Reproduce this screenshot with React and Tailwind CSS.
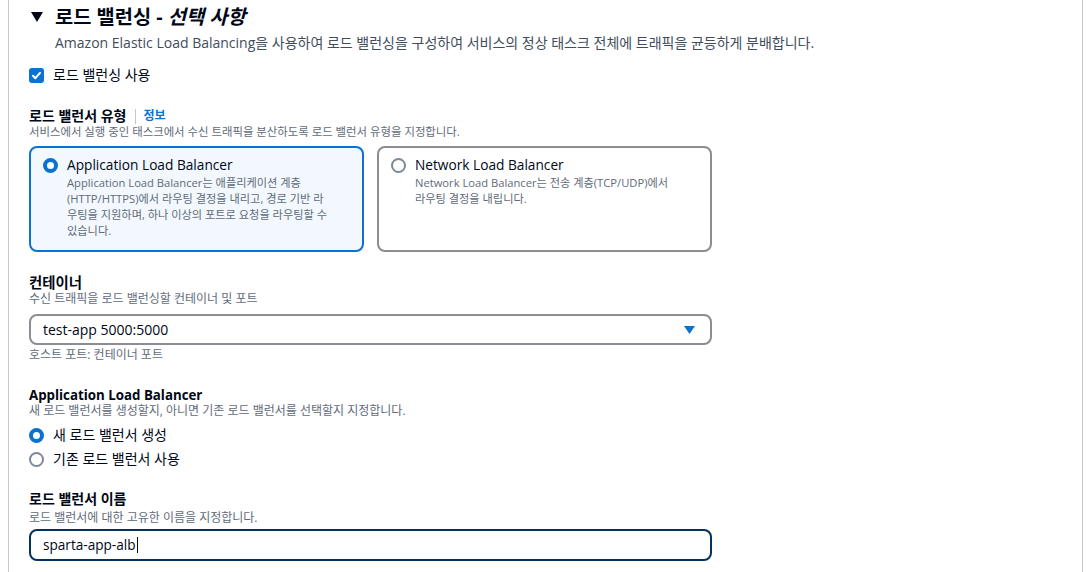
import React from "react";

const font = { fontFamily: '"Open Sans", "Noto Sans CJK KR", sans-serif' };

function Radio({ checked }) {
  return checked ? (
    <span className="inline-block w-[15px] h-[15px] rounded-full border-[4px] border-[#0972d3] bg-white shrink-0" />
  ) : (
    <span className="inline-block w-[15px] h-[15px] rounded-full border-2 border-[#7d8998] bg-white shrink-0" />
  );
}

function LbCard({ checked, title, lines }) {
  return (
    <div
      className={`h-[106px] rounded-lg border-2 px-3 pt-[10px] ${
        checked ? "border-[#0972d3] bg-[#f2f8fd]" : "border-[#8c8c94] bg-white"
      }`}
    >
      <div className="flex gap-[9px]">
        <div className="h-[15px] flex items-center">
          <Radio checked={checked} />
        </div>
        <div className="-mt-[1px]">
          <div className="text-[13.7px] leading-[16px] text-[#000716]">{title}</div>
          <div className="mt-[2px] text-[11.2px] leading-[16px] text-[#5f6b7a]">
            {lines.map((l, i) => (
              <div key={i} className="whitespace-nowrap">{l}</div>
            ))}
          </div>
        </div>
      </div>
    </div>
  );
}

function Heading({ children, className = "text-[14px]" }) {
  return <div className={`leading-[16px] font-bold text-[#000716] ${className}`}>{children}</div>;
}

function Desc({ children, className = "" }) {
  return <div className={`leading-[16px] text-[#5f6b7a] ${className}`}>{children}</div>;
}

export default function App() {
  return (
    <div style={font} className="min-h-screen bg-white">
      <div className="ml-2 mr-[4px] h-[572px] border-x border-[#c6c6cd] bg-white">
        {/* section header */}
        <div className="flex items-center pt-[7px] h-[27px] pl-[22px]">
          <svg width="12" height="10" viewBox="0 0 12 10" className="shrink-0">
            <path d="M0 0 L12 0 L6 10 Z" fill="#000716" />
          </svg>
          <h2 className="ml-3 text-[19.8px] leading-[20px] font-bold text-[#000716]">
            로드 밸런싱 - <i>선택 사항</i>
          </h2>
        </div>
        <div className="pl-[46px] mt-[7px] text-[14px] leading-[18px] text-[#414d5c]">
          Amazon Elastic Load Balancing을 사용하여 로드 밸런싱을 구성하여 서비스의 정상 태스크 전체에 트래픽을 균등하게 분배합니다.
        </div>

        <div className="pl-5 w-[703px]">
          {/* checkbox */}
          <div className="mt-[15px] flex items-center h-[16px]">
            <span className="w-[15px] h-[15px] rounded-[3px] bg-[#0972d3] flex items-center justify-center">
              <svg width="11" height="11" viewBox="0 0 11 11">
                <path d="M2 5.8 L4.4 8.2 L9 2.8" fill="none" stroke="white" strokeWidth="2" strokeLinecap="round" strokeLinejoin="round" />
              </svg>
            </span>
            <span className="ml-[9px] text-[14px] leading-[16px] text-[#000716]">로드 밸런싱 사용</span>
          </div>

          {/* lb type */}
          <div className="mt-[25px] flex items-center">
            <Heading>로드 밸런서 유형</Heading>
            <span className="ml-[9px] h-[15px] border-l border-[#c6c6cd]" />
            <span className="ml-[7px] text-[12px] leading-[16px] font-bold text-[#0972d3]">정보</span>
          </div>
          <Desc className="text-[11.4px]">서비스에서 실행 중인 태스크에서 수신 트래픽을 분산하도록 로드 밸런서 유형을 지정합니다.</Desc>
          <div className="mt-[6px] grid grid-cols-2 gap-[13px]">
            <LbCard
              checked
              title="Application Load Balancer"
              lines={[
                "Application Load Balancer는 애플리케이션 계층",
                "(HTTP/HTTPS)에서 라우팅 결정을 내리고, 경로 기반 라",
                "우팅을 지원하며, 하나 이상의 포트로 요청을 라우팅할 수",
                "있습니다.",
              ]}
            />
            <LbCard
              title="Network Load Balancer"
              lines={["Network Load Balancer는 전송 계층(TCP/UDP)에서", "라우팅 결정을 내립니다."]}
            />
          </div>

          {/* container */}
          <div className="mt-[23px]">
            <Heading className="text-[14.4px]">컨테이너</Heading>
          </div>
          <Desc className="text-[12px]">수신 트래픽을 로드 밸런싱할 컨테이너 및 포트</Desc>
          <div className="mt-[7px] h-[31px] rounded-lg border-2 border-[#8c8c94] flex items-center justify-between pl-3 pr-[15px]">
            <span className="text-[14px] text-[#000716]">test-app 5000:5000</span>
            <svg width="11" height="8" viewBox="0 0 11 8">
              <path d="M0 0 L11 0 L5.5 8 Z" fill="#0972d3" />
            </svg>
          </div>
          <Desc className="mt-[2px] text-[12px]">호스트 포트: 컨테이너 포트</Desc>

          {/* alb */}
          <div className="mt-[24px]">
            <Heading className="text-[13.3px]">Application Load Balancer</Heading>
          </div>
          <Desc className="text-[12px]">새 로드 밸런서를 생성할지, 아니면 기존 로드 밸런서를 선택할지 지정합니다.</Desc>
          <div className="mt-[8px] flex items-center h-[16px]">
            <Radio checked />
            <span className="ml-[9px] text-[14px] leading-[16px] text-[#000716]">새 로드 밸런서 생성</span>
          </div>
          <div className="mt-[8px] flex items-center h-[16px]">
            <Radio />
            <span className="ml-[9px] text-[14px] leading-[16px] text-[#000716]">기존 로드 밸런서 사용</span>
          </div>

          {/* name */}
          <div className="mt-[24px]">
            <Heading>로드 밸런서 이름</Heading>
          </div>
          <Desc className="mt-[3px] text-[12px]">로드 밸런서에 대한 고유한 이름을 지정합니다.</Desc>
          <div className="mt-[3px] h-[32px] rounded-lg border-2 border-[#033160] flex items-center pl-3">
            <span className="text-[13.6px] text-[#000716]">sparta-app-alb</span>
            <span className="ml-[1px] w-px h-[16px] bg-[#000716]" />
          </div>
        </div>
      </div>
    </div>
  );
}
